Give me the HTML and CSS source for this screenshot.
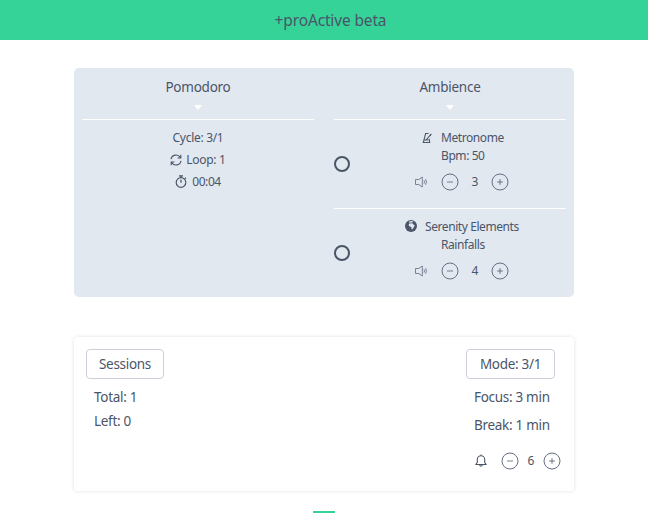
FILE: index.html
```html
<!DOCTYPE html>
<html lang="en">
<head>
<meta charset="utf-8">
<title>+proActive beta</title>
<link rel="stylesheet" href="styles.css">
</head>
<body>
<svg class="defs" width="0" height="0">
  <symbol id="minus" viewBox="0 0 18 18"><circle cx="9" cy="9" r="8" fill="none" stroke="currentColor"/><path d="M6 9h6" fill="none" stroke="currentColor" stroke-width=".9"/></symbol>
  <symbol id="plus" viewBox="0 0 18 18"><circle cx="9" cy="9" r="8" fill="none" stroke="currentColor"/><path d="M6.2 9h5.6M9 6.2v5.6" fill="none" stroke="currentColor" stroke-width="1"/></symbol>
  <symbol id="speaker" viewBox="0 0 14 12"><path d="M1.5 3.5h3.3L8.3 1v10L4.8 8.5H1.5zM10 4.4q1 1.6 0 3.2M11.6 3.2q1.6 2.8 0 5.6" fill="none" stroke="currentColor" stroke-width=".85"/></symbol>
</svg>
<header class="topbar"><h1 class="brand">+proActive beta</h1></header>
<main class="page">
  <section class="panel">
    <div class="column">
      <h2 class="heading">Pomodoro</h2>
      <div class="caret-row"><i class="caret"></i></div>
      <div class="timer">
        <p class="row">Cycle: 3/1</p>
        <p class="row"><svg class="loop" viewBox="0 0 12 12"><path d="M1 5.2A5 5 0 0 1 10.3 3.6M11 6.8A5 5 0 0 1 1.7 8.4M10.8 .8v3.2H7.6M1.2 11.2V8h3.2" fill="none" stroke="currentColor" stroke-width="1.1"/></svg><span>Loop: 1</span></p>
        <p class="row"><svg class="watch" viewBox="0 0 12 13"><circle cx="6" cy="7.5" r="4.8" fill="none" stroke="currentColor" stroke-width="1.2"/><path d="M4 .8h4M6 1v2M6 4.8v3M9.9 2.8l1 1" fill="none" stroke="currentColor" stroke-width="1.3"/></svg><span class="time">00:04</span></p>
      </div>
    </div>
    <div class="column">
      <h2 class="heading">Ambience</h2>
      <div class="caret-row"><i class="caret"></i></div>
      <article class="sound">
        <i class="radio"></i>
        <div class="details">
          <p class="name metronome"><svg class="metro" viewBox="0 0 12 12"><path d="M7.6 1.5H4.6L2.3 10.5H8.7L8.2 6.8M3.2 8H7.5M5 8L10.4 1.8M8.6 2.8L9.9 3.9" fill="none" stroke="currentColor" stroke-width="1.05"/></svg><span>Metronome</span></p>
          <p class="sub bpm">Bpm: 50</p>
          <div class="volume"><svg class="speaker"><use href="#speaker"/></svg><svg class="knob"><use href="#minus"/></svg><span class="level">3</span><svg class="knob"><use href="#plus"/></svg></div>
        </div>
      </article>
      <article class="sound">
        <i class="radio"></i>
        <div class="details">
          <p class="name"><svg class="globe" viewBox="0 0 12 12"><circle cx="6" cy="6" r="6" fill="currentColor"/><path d="M4.3 3.6L7.3 3.2 9.2 5.2H9.9L8.3 7.9 7.2 9.6 6.4 9V7L4.1 6.3 3.7 4.7zM3.8 1.8L6 .9 8.6 1.5 6.9 2.6 4.5 2.7z" fill="#e2e8f0"/></svg><span>Serenity Elements</span></p>
          <p class="sub rain">Rainfalls</p>
          <div class="volume"><svg class="speaker"><use href="#speaker"/></svg><svg class="knob"><use href="#minus"/></svg><span class="level">4</span><svg class="knob"><use href="#plus"/></svg></div>
        </div>
      </article>
    </div>
  </section>
  <section class="summary">
    <div class="sessions">
      <button class="btn btn-sessions">Sessions</button>
      <p class="stat">Total: 1</p>
      <p class="stat">Left: 0</p>
    </div>
    <div class="mode">
      <button class="btn btn-mode">Mode: 3/1</button>
      <p class="stat">Focus: 3 min</p>
      <p class="stat stat-break">Break: 1 min</p>
      <div class="alarm"><svg class="bell" viewBox="0 0 12 14"><path d="M.8 10.5H11.2L9.7 8.5V5.5A3.7 3.7 0 0 0 2.3 5.5V8.5zM4.5 10.8Q6 13.8 7.5 10.8M6 .5V2" fill="none" stroke="currentColor" stroke-width="1.1" stroke-linejoin="round"/></svg><svg class="knob"><use href="#minus"/></svg><span class="level">6</span><svg class="knob"><use href="#plus"/></svg></div>
    </div>
  </section>
  <i class="marker"></i>
</main>
</body>
</html>
```

FILE: styles.css
```css
* { box-sizing: border-box; margin: 0; padding: 0; }
html, body { height: 100%; overflow: hidden; }
body { background: #fff; color: #4a5568; font: 12px/18px "Noto Sans", "Open Sans", sans-serif; }
svg { display: block; flex: none; }
.defs { position: absolute; }
.topbar { height: 40px; background: #36d399; display: flex; justify-content: center; align-items: center; padding-left: 13px; }
.brand { font-size: 15.5px; font-weight: 400; line-height: 24px; letter-spacing: -.15px; }
.page { width: 500px; margin: 28px auto 0; display: flex; flex-direction: column; }
.panel { height: 229px; background: #e2e8f0; border-radius: 5px; padding: 9px 8px 0; display: grid; grid-template-columns: 232px 232px; gap: 20px; }
.heading { font-size: 13.5px; font-weight: 400; line-height: 20px; text-align: center; letter-spacing: -.25px; }
.caret-row { height: 22px; display: flex; justify-content: center; padding-top: 8px; }
.caret { width: 0; height: 0; border: 4.5px solid transparent; border-top: 5px solid #fff; border-bottom: 0; }
.timer { border-top: 1px solid #fff; padding-top: 7px; }
.row { height: 22px; display: flex; align-items: center; justify-content: center; gap: 4px; letter-spacing: -.3px; }
.loop { width: 12px; height: 12px; }
.watch { width: 12px; height: 13px; margin-top: -2px; }
.time { letter-spacing: -.45px; padding-left: 1px; }
.sound { height: 89px; border-top: 1px solid #fff; display: flex; }
.radio { width: 16px; height: 16px; margin-top: 36px; border: 2px solid #4a5568; border-radius: 50%; }
.details { flex: 1; padding-top: 9px; }
.name, .sub { height: 18px; letter-spacing: -.42px; }
.name { display: flex; align-items: center; gap: 8px; padding-left: 55px; }
.metronome { padding-left: 71px; }
.metro { width: 12px; height: 12px; }
.globe { width: 12px; height: 12px; margin-top: -2px; }
.sub { padding-left: 91px; }
.volume { display: flex; align-items: center; height: 18px; margin-top: 8px; padding-left: 64px; color: #667085; }
.speaker { width: 14px; height: 12px; margin-right: 13px; }
.knob { width: 18px; height: 18px; }
.level { width: 32px; text-align: center; color: #4a5568; }
.summary { height: 154px; margin-top: 40px; padding: 12px; border-radius: 4px; background: #fff; box-shadow: 0 0 4px rgba(0, 0, 0, .12); display: flex; justify-content: space-between; font-size: 13.5px; }
.btn { display: block; height: 30px; border: 1px solid #cbd0da; border-radius: 4px; background: #fff; color: inherit; font: inherit; letter-spacing: -.3px; white-space: nowrap; }
.btn-sessions { width: 78px; margin-bottom: 6px; }
.btn-mode { width: 89px; margin-bottom: 6px; }
.mode { width: 96px; }
.stat { height: 24px; line-height: 24px; padding-left: 8px; letter-spacing: -.3px; white-space: nowrap; }
.stat-break { margin-top: 4px; }
.alarm { display: flex; align-items: center; height: 18px; margin-top: 15px; padding-left: 9px; font-size: 12px; color: #667085; }
.bell { width: 12px; height: 14px; margin-right: 14px; color: #4a5568; }
.alarm .level { width: 24px; }
.marker { width: 22px; height: 4px; margin: 20px auto 0; background: #36d399; }
```
